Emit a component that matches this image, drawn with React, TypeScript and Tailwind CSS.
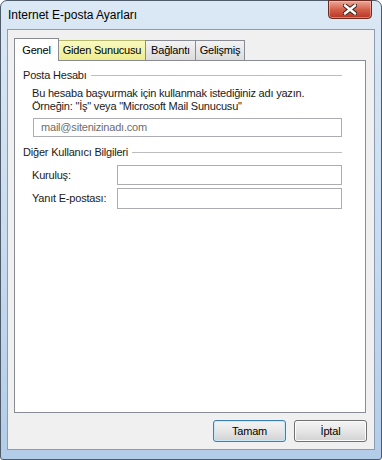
import React from 'react'

/**
 * Internet E-posta Ayarları dialog (Windows 7 style)
 */

const FONT = { fontFamily: '"Liberation Sans", Arial, sans-serif', letterSpacing: '-0.2px' }

interface TabProps {
  label: string
  active?: boolean
  hover?: boolean
  width: string
}

function Tab({ label, active, hover, width }: TabProps) {
  if (active) {
    return (
      <div
        className={`${width} h-[23px] -mb-px relative z-10 bg-white border border-b-0 border-[#898c95] flex items-center justify-center text-[11px] text-black whitespace-nowrap`}
      >
        {label}
      </div>
    )
  }
  return (
    <div
      className={`${width} h-[20px] -ml-px border border-b-0 flex items-center justify-center text-[11px] text-black whitespace-nowrap ${
        hover
          ? 'bg-gradient-to-b from-[#fafac0] to-[#ecec8c] border-[#b9b96a]'
          : 'bg-gradient-to-b from-[#f3f3f3] to-[#dcdcdc] border-[#898c95]'
      }`}
    >
      {label}
    </div>
  )
}

function GroupTitle({ label }: { label: string }) {
  return (
    <div className="flex items-center gap-[4px] h-[15px]">
      <span className="text-[11px] text-[#1a1a1a] leading-[15px] whitespace-nowrap">{label}</span>
      <div className="flex-1 h-px bg-[#bdbdbd]" />
    </div>
  )
}

function TextBox({ value, className = '' }: { value?: string; className?: string }) {
  return (
    <div
      className={`border border-[#abadb3] bg-white flex items-center pl-[7px] text-[11px] text-[#6d6d6d] ${className}`}
    >
      {value}
    </div>
  )
}

export default function App() {
  return (
    <div className="w-[382px] h-[460px] bg-white" style={FONT}>
      <div className="w-[382px] h-[460px] rounded-t-[7px] rounded-b-[3px] border border-[#4d5b6a] bg-gradient-to-b from-[#dbe8f5] via-[#c9dcf0] to-[#b3cce8] flex flex-col relative">
        {/* Title bar */}
        <div className="h-[28px] flex items-center pl-[7px] text-[12px] tracking-normal text-black">
          Internet E-posta Ayarları
        </div>

        {/* Close button */}
        <div className="absolute top-[-1px] right-[9px] w-[44px] h-[19px] rounded-b-[4px] border border-[#6b2a22] bg-gradient-to-b from-[#eaa999] via-[#d4604c] to-[#b8321f] flex items-center justify-center shadow-[inset_0_0_0_1px_rgba(255,200,190,0.5)]">
          <svg width="14" height="11" viewBox="0 0 14 11">
            <path
              d="M2 1.5 L12 9.5 M12 1.5 L2 9.5"
              stroke="#3a1a14"
              strokeWidth="4.4"
              strokeLinecap="round"
            />
            <path
              d="M2 1.5 L12 9.5 M12 1.5 L2 9.5"
              stroke="#ffffff"
              strokeWidth="2.6"
              strokeLinecap="round"
            />
          </svg>
        </div>

        {/* Client area */}
        <div className="flex-1 mx-[6px] mb-[9px] border border-[#8a9db5] bg-[#f0f0f0] flex flex-col pl-[6px]">
          {/* Tabs */}
          <div className="mt-[8px] flex items-end">
            <Tab label="Genel" active width="w-[45px]" />
            <Tab label="Giden Sunucusu" hover width="w-[88px]" />
            <Tab label="Bağlantı" width="w-[51px]" />
            <Tab label="Gelişmiş" width="w-[50px]" />
          </div>

          {/* Panel */}
          <div className="w-[352px] h-[353px] border border-[#898c95] bg-white pl-[8px] pr-[23px] pt-[7px] text-[11px] text-[#1a1a1a]">
            <GroupTitle label="Posta Hesabı" />
            <div className="pl-[9px] mt-[4px] leading-[13px]">
              <div className="h-[13px] whitespace-nowrap">Bu hesaba başvurmak için kullanmak istediğiniz adı yazın.</div>
              <div className="h-[13px] whitespace-nowrap">Örneğin: "İş" veya "Microsoft Mail Sunucusu"</div>
              <TextBox value="mail@sitenizinadı.com" className="h-[19px] mt-[5px] ml-px" />
            </div>

            <div className="mt-[8px]">
              <GroupTitle label="Diğer Kullanıcı Bilgileri" />
            </div>
            <div className="pl-[9px] mt-[5px] flex flex-col gap-[3px]">
              <div className="flex items-center h-[20px]">
                <span className="w-[85px]">Kuruluş:</span>
                <TextBox className="flex-1 h-[20px]" />
              </div>
              <div className="flex items-center h-[21px]">
                <span className="w-[85px]">Yanıt E-postası:</span>
                <TextBox className="flex-1 h-[21px]" />
              </div>
            </div>
          </div>

          {/* Buttons */}
          <div className="mt-[7px] flex justify-end gap-[8px] w-[353px]">
            <button className="w-[73px] h-[22px] rounded-[3px] border border-[#3c7fb1] bg-gradient-to-b from-[#f4f4f4] via-[#e6e6e6] to-[#d2d2d2] shadow-[inset_0_0_0_1px_#c6e8f8] text-[11px] text-black">
              Tamam
            </button>
            <button className="w-[73px] h-[22px] rounded-[3px] border border-[#707070] bg-gradient-to-b from-[#f4f4f4] via-[#e6e6e6] to-[#d2d2d2] shadow-[inset_0_0_0_1px_#fcfcfc] text-[11px] text-black">
              İptal
            </button>
          </div>
        </div>
      </div>
    </div>
  )
}
